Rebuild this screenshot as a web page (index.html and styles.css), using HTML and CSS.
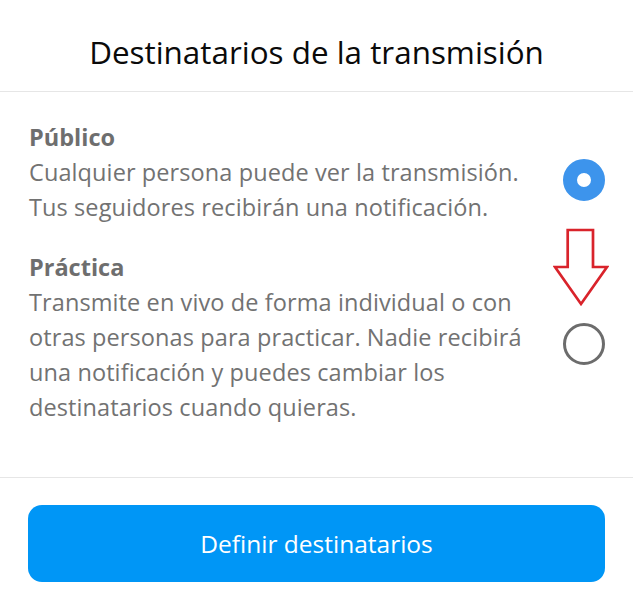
FILE: index.html
```html
<!DOCTYPE html>
<html lang="es">
<head>
<meta charset="utf-8">
<link rel="stylesheet" href="styles.css">
</head>
<body>
<div class="sheet">
  <header class="header">
    <h1 class="title">Destinatarios de la transmisión</h1>
  </header>
  <div class="options">
    <div class="option">
      <div class="option-text">
        <div class="option-name">Público</div>
        <div class="option-desc">Cualquier persona puede ver la transmisión.<br>Tus seguidores recibirán una notificación.</div>
      </div>
      <span class="radio radio-on"></span>
    </div>
    <div class="option">
      <div class="option-text">
        <div class="option-name">Práctica</div>
        <div class="option-desc">Transmite en vivo de forma individual o con<br>otras personas para practicar. Nadie recibirá<br>una notificación y puedes cambiar los<br>destinatarios cuando quieras.</div>
      </div>
      <span class="radio"></span>
      <svg class="arrow" width="56" height="80" viewBox="0 0 56 80" aria-hidden="true">
        <path d="M14.7 3 H40 V40 H54 L28 77 L2 40 H14.7 Z" fill="none" stroke="#d9232b" stroke-width="2.7" stroke-linejoin="miter"/>
      </svg>
    </div>
  </div>
  <div class="footer">
    <button class="cta">Definir destinatarios</button>
  </div>
</div>
</body>
</html>
```
FILE: styles.css
```css
* { box-sizing: border-box; }
html, body { margin: 0; padding: 0; background: #fff; }
body {
  width: 633px;
  height: 600px;
  font-family: "Open Sans", "Noto Sans", "Liberation Sans", sans-serif;
  overflow: hidden;
}
.sheet { display: flex; flex-direction: column; }
.header {
  height: 92px;
  border-bottom: 1px solid #e6e6e6;
  display: flex;
  align-items: center;
  justify-content: center;
  padding-top: 12px;
}
.title {
  margin: 0;
  font-size: 31.4px;
  font-weight: 400;
  color: #0a0a0a;
}
.options {
  padding: 28px 28px 52px 29px;
  display: flex;
  flex-direction: column;
  gap: 25px;
  border-bottom: 1px solid #e6e6e6;
}
.option {
  position: relative;
  display: flex;
  align-items: center;
  justify-content: space-between;
}
.option-name {
  font-size: 23.5px;
  font-weight: 700;
  line-height: 35px;
  color: #6e6e6e;
}
.option-desc {
  font-size: 23.5px;
  line-height: 35px;
  color: #727272;
  letter-spacing: 0.1px;
}
.radio {
  width: 42px;
  height: 42px;
  border-radius: 50%;
  border: 3px solid #6c6c6c;
  flex: none;
  margin-top: 12px;
}
.radio-on {
  border: 14px solid #3d94ec;
  background: #fff;
  margin-top: 14px;
}
.arrow {
  position: absolute;
  right: -4px;
  top: -23.5px;
}
.footer {
  padding: 27px 28px 0 28px;
}
.cta {
  width: 577px;
  height: 77px;
  border: none;
  border-radius: 14px;
  background: #0096f6;
  color: #fff;
  font-family: inherit;
  font-size: 24.5px;
  font-weight: 500;
}
```
